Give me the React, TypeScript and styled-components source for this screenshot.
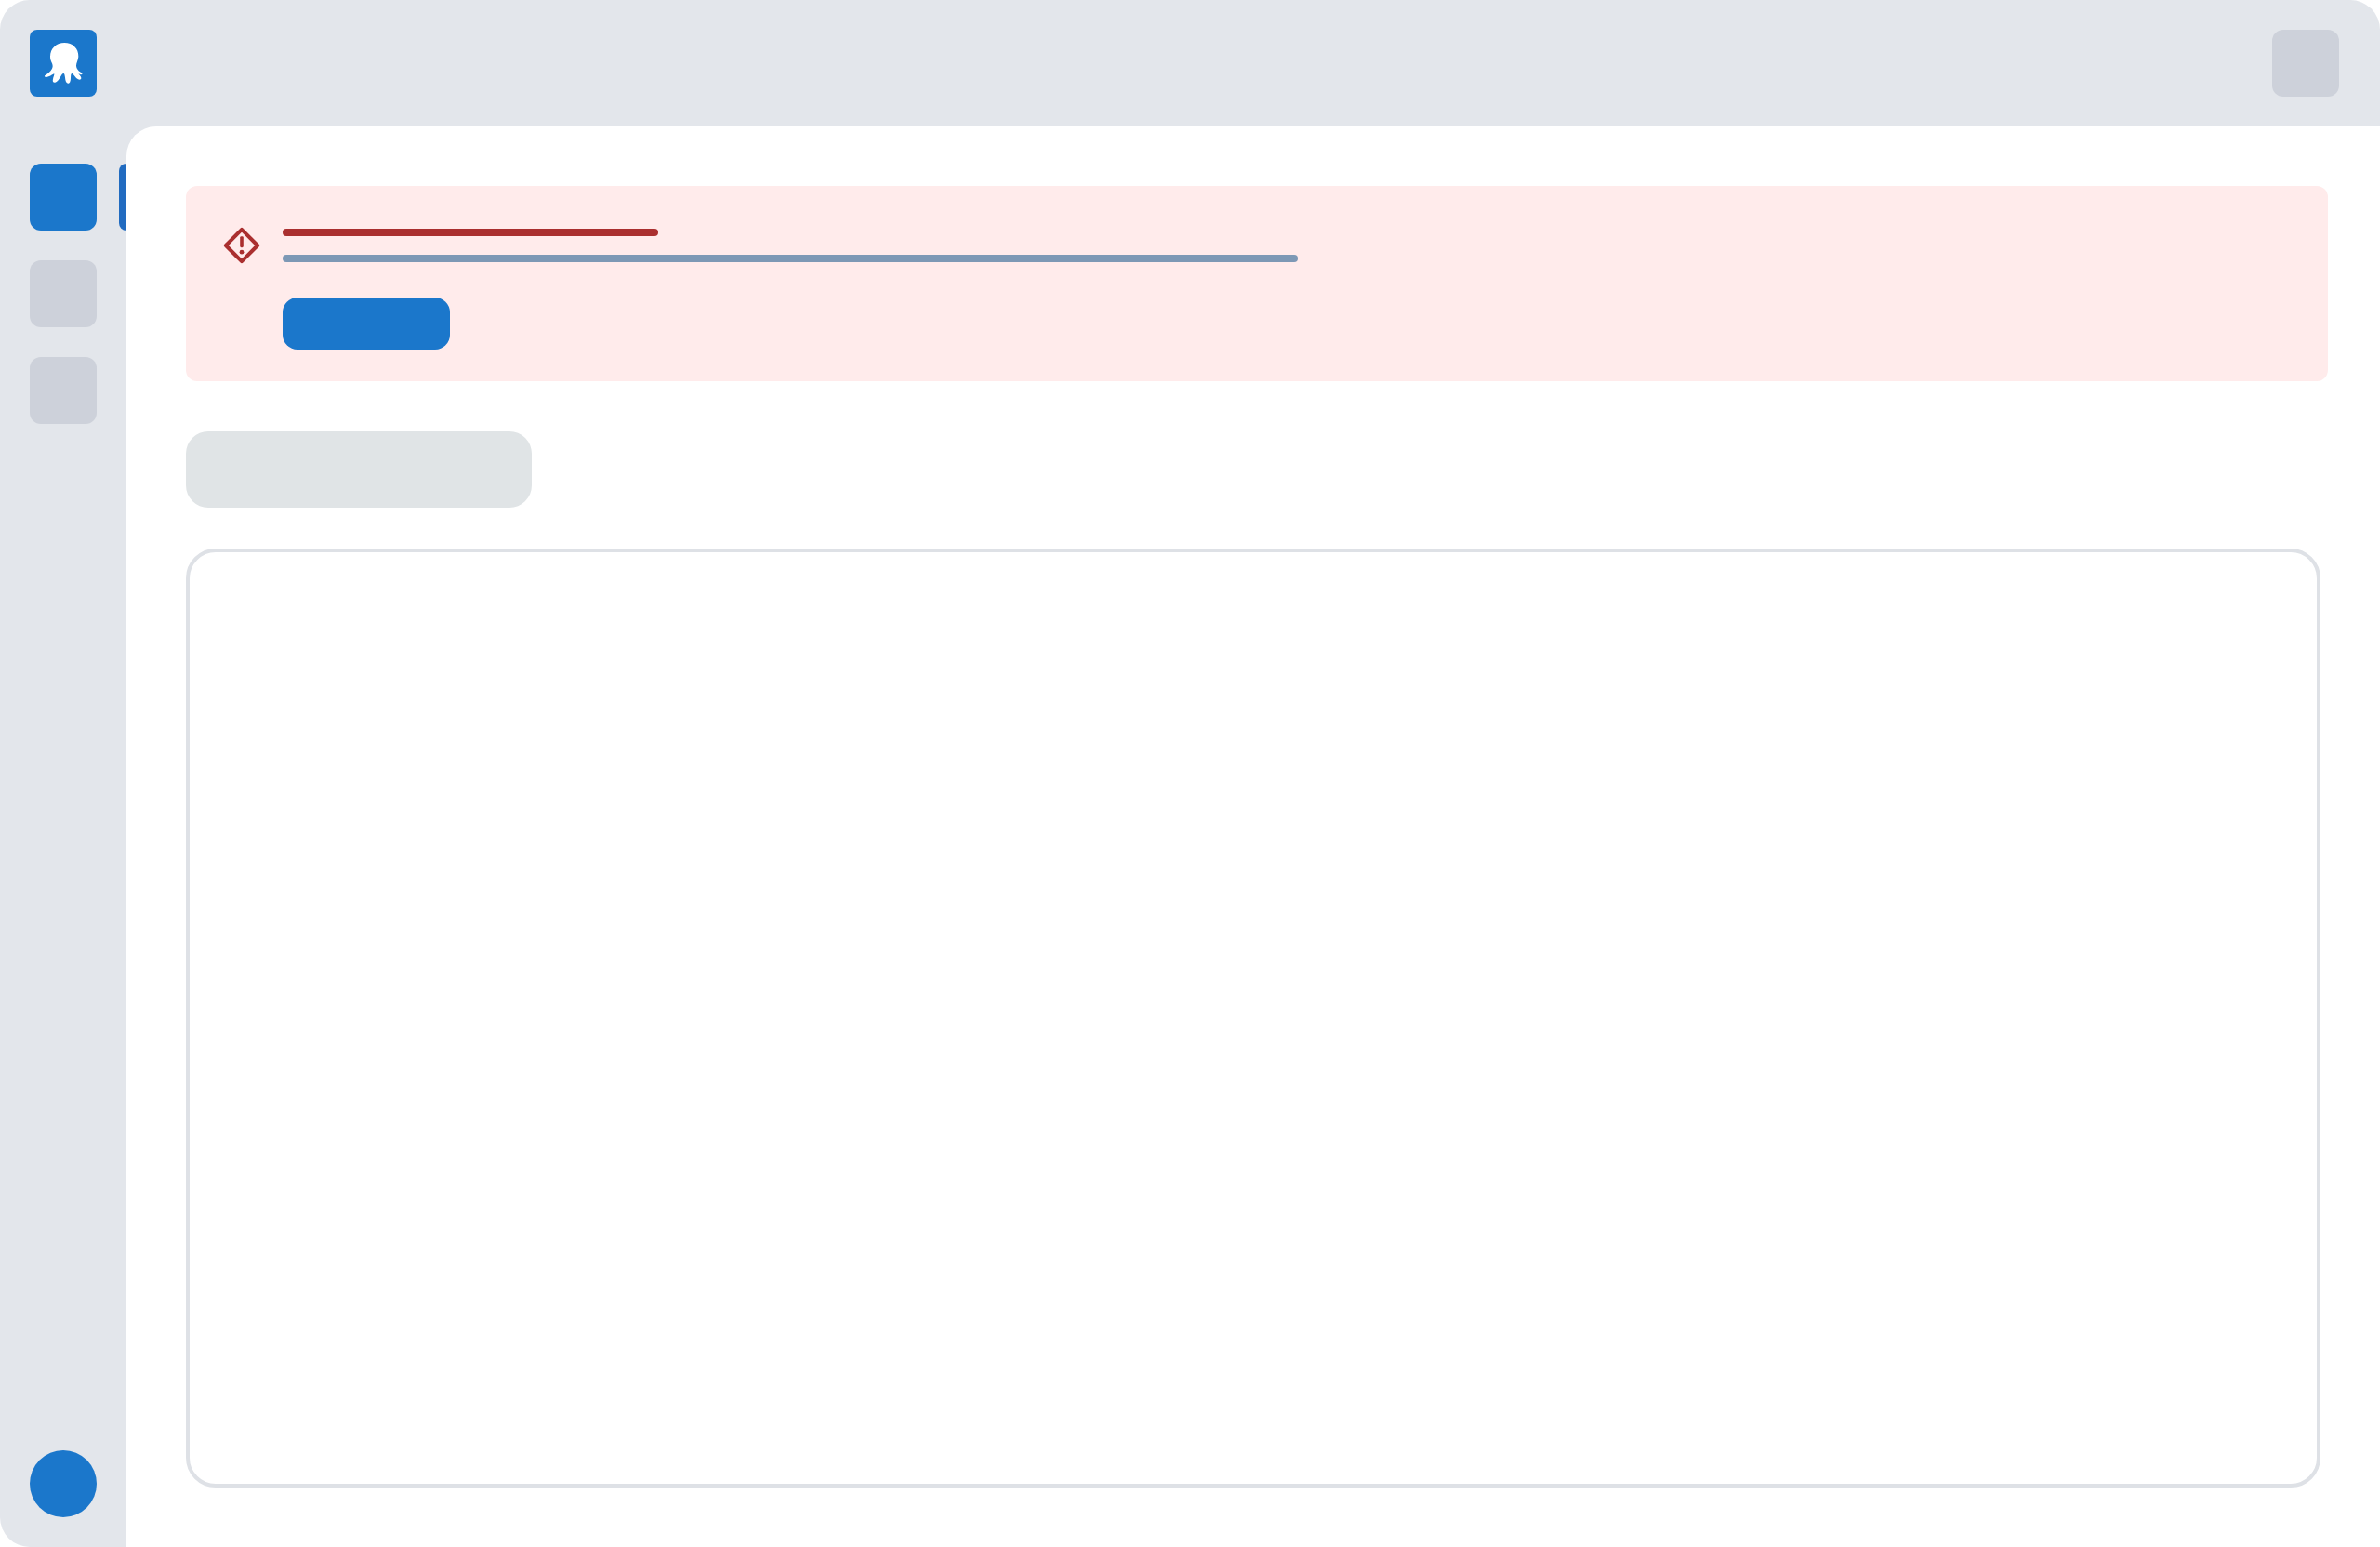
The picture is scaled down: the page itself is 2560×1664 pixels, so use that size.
import React from "react";
import styled, { createGlobalStyle } from "styled-components";

const color = {
  chrome: "#e3e6eb",
  muted: "#cdd1da",
  blue: "#1b77cb",
  indicator: "#216bc0",
  surface: "#ffffff",
  dangerSurface: "#ffebeb",
  danger: "#aa2f2f",
  copy: "#7d98b5",
  heading: "#e0e4e6",
  outline: "#dee1e6",
};

const GlobalStyle = createGlobalStyle`
  *, *::before, *::after { box-sizing: border-box; }
  body {
    margin: 0;
    background: ${color.surface};
    font-family: Inter, "Liberation Sans", sans-serif;
  }
`;

const Shell = styled.div`
  display: grid;
  grid-template-columns: 136px minmax(0, 1fr);
  grid-template-rows: 136px 1fr;
  min-height: 100vh;
  background: ${color.chrome};
  border-radius: 32px 32px 0 32px;
  overflow: hidden;
`;

const TopBar = styled.header`
  grid-column: 1 / -1;
  display: flex;
  align-items: center;
  justify-content: space-between;
  padding: 0 44px 0 32px;
`;

const LogoLink = styled.a`
  display: block;
  width: 72px;
  height: 72px;
  border-radius: 8px;
  background: ${color.blue};
`;

const Tile = styled.button<{ $active?: boolean; $round?: boolean }>`
  display: block;
  width: 72px;
  height: 72px;
  padding: 0;
  border: 0;
  border-radius: ${(p) => (p.$round ? "50%" : "12px")};
  background: ${(p) => (p.$active ? color.blue : color.muted)};
  cursor: pointer;
`;

const SideBar = styled.aside`
  display: flex;
  flex-direction: column;
  justify-content: space-between;
  padding: 40px 0 32px 32px;
`;

const NavList = styled.nav`
  display: flex;
  flex-direction: column;
  gap: 32px;
`;

const NavRow = styled.div`
  display: flex;
  justify-content: space-between;
`;

const ActiveMark = styled.span`
  width: 8px;
  border-radius: 8px 0 0 8px;
  background: ${color.indicator};
`;

const Main = styled.main`
  display: flex;
  flex-direction: column;
  padding: 64px 56px 64px 64px;
  border-top-left-radius: 32px;
  background: ${color.surface};
`;

const Alert = styled.section`
  display: flex;
  align-items: flex-start;
  gap: 24px;
  padding: 44px 40px 34px;
  border-radius: 12px;
  background: ${color.dangerSurface};
`;

const AlertIcon = styled.svg`
  flex: none;
  width: 40px;
  height: 40px;
`;

const AlertBody = styled.div`
  flex: 1;
  display: flex;
  flex-direction: column;
  align-items: flex-start;
  gap: 20px;
  padding-top: 2px;
`;

const Line = styled.div<{ $width: number; $color: string }>`
  width: ${(p) => p.$width}px;
  max-width: 100%;
  height: 8px;
  border-radius: 4px;
  background: ${(p) => p.$color};
`;

const ActionButton = styled.button`
  width: 180px;
  height: 56px;
  margin-top: 18px;
  padding: 0;
  border: 0;
  border-radius: 16px;
  background: ${color.blue};
  cursor: pointer;
`;

const Heading = styled.div`
  width: 372px;
  height: 82px;
  margin: 54px 0 44px;
  border-radius: 24px;
  background: ${color.heading};
`;

const ContentPanel = styled.section`
  flex: 1;
  margin-right: 8px;
  border: 4px solid ${color.outline};
  border-radius: 32px;
`;

const navItems = [
  { label: "Dashboard", active: true },
  { label: "Projects", active: false },
  { label: "Infrastructure", active: false },
];

function Octopus() {
  return (
    <svg viewBox="96 96 216 216" width="72" height="72" aria-hidden="true">
      <path
        fill="#fff"
        d="M208 138C234 138 254 156 253 183C252 195 246 203 246 212C247 224 256 231 263 234C267 237 266 241 262 241C259 241 256 239 253 238C256 242 262 248 262 252C262 257 257 258 252 256C244 252 238 240 233 237C228 236 229 243 228 250C228 260 226 270 220 269C213 269 211 260 210 250C209 243 208 237 205 237C201 237 198 243 194 250C190 257 184 265 178 266C171 267 169 262 171 255C172 249 176 241 175 238C171 238 164 247 150 249C143 249 142 245 146 243C153 239 169 228 170 214C170 203 162 198 162 183C162 156 182 138 208 138Z"
      />
    </svg>
  );
}

export default function App() {
  return (
    <>
      <GlobalStyle />
      <Shell>
        <TopBar>
          <LogoLink href="#" aria-label="Home">
            <Octopus />
          </LogoLink>
          <Tile type="button" aria-label="Settings" />
        </TopBar>
        <SideBar>
          <NavList aria-label="Primary">
            {navItems.map((item) => (
              <NavRow key={item.label}>
                <Tile
                  type="button"
                  $active={item.active}
                  aria-label={item.label}
                  aria-current={item.active ? "page" : undefined}
                />
                {item.active && <ActiveMark />}
              </NavRow>
            ))}
          </NavList>
          <Tile type="button" $active $round aria-label="Account" />
        </SideBar>
        <Main>
          <Alert role="alert">
            <AlertIcon viewBox="0 0 40 40" aria-hidden="true">
              <path
                d="M20 2.9L37.1 20L20 37.1L2.9 20Z"
                fill="none"
                stroke={color.danger}
                strokeWidth="4"
                strokeLinejoin="round"
              />
              <rect
                x="18.2"
                y="10.2"
                width="3.6"
                height="12"
                rx="1.4"
                fill={color.danger}
              />
              <circle cx="20" cy="27.2" r="2.4" fill={color.danger} />
            </AlertIcon>
            <AlertBody>
              <Line $width={404} $color={color.danger} />
              <Line $width={1092} $color={color.copy} />
              <ActionButton type="button" aria-label="Resolve" />
            </AlertBody>
          </Alert>
          <Heading />
          <ContentPanel aria-label="Content" />
        </Main>
      </Shell>
    </>
  );
}
